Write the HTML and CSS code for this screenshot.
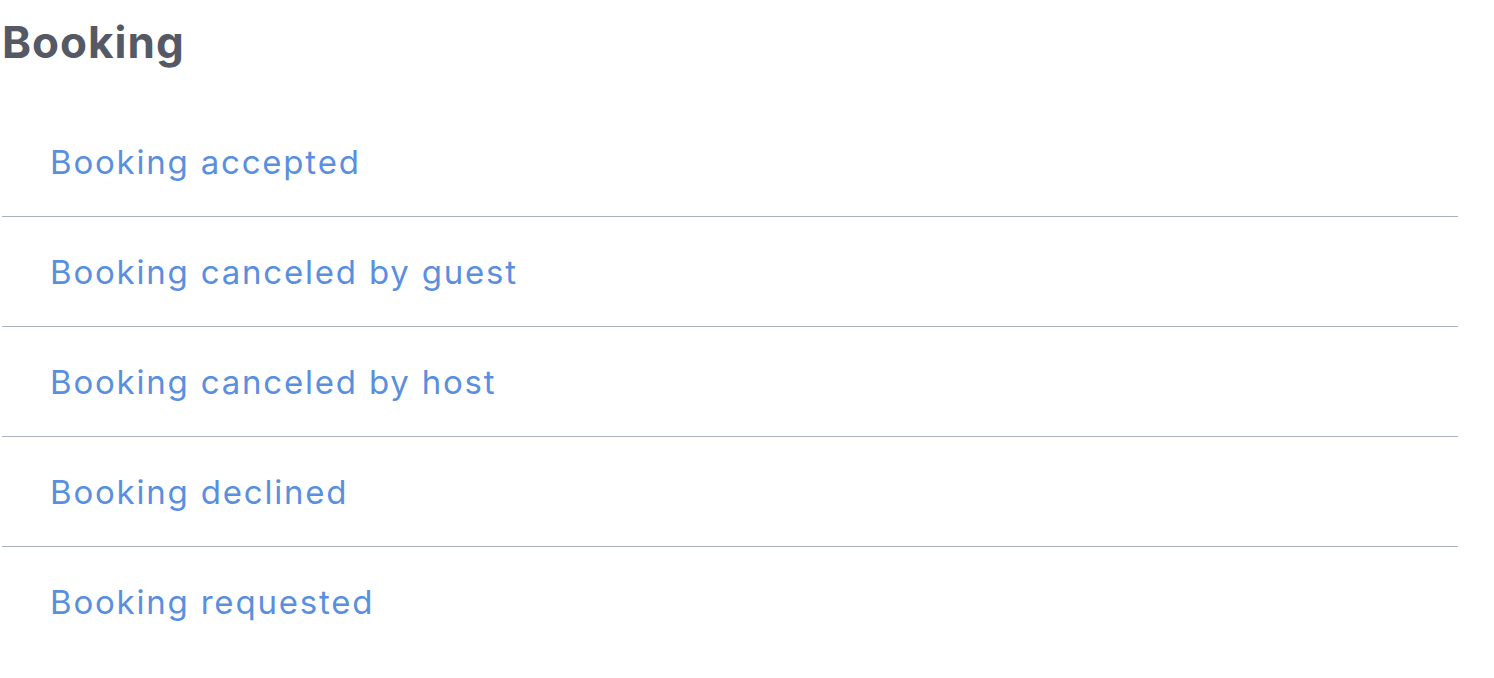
FILE: index.html
```html
<!DOCTYPE html>
<html>
<head>
<meta charset="utf-8">
<link rel="stylesheet" href="styles.css">
</head>
<body>
<div class="page">
  <h1 class="title">Booking</h1>
  <ul class="list">
    <li class="item"><a class="link" href="#">Booking accepted</a></li>
    <li class="item"><a class="link" href="#">Booking canceled by guest</a></li>
    <li class="item"><a class="link" href="#">Booking canceled by host</a></li>
    <li class="item"><a class="link" href="#">Booking declined</a></li>
    <li class="item"><a class="link" href="#">Booking requested</a></li>
  </ul>
</div>
</body>
</html>
```
FILE: styles.css
```css
html, body {
  margin: 0;
  padding: 0;
  background: #ffffff;
}
.page {
  width: 1456px;
  padding-left: 2px;
  font-family: Inter, "Noto Sans", sans-serif;
}
.title {
  margin: 0;
  padding-top: 14px;
  padding-left: 0;
  font-size: 44px;
  line-height: 56px;
  font-weight: 700;
  color: #555966;
  letter-spacing: 1px;
}
.list {
  list-style: none;
  margin: 37px 0 0 0;
  padding: 0;
}
.item {
  height: 109px;
  display: flex;
  align-items: center;
  padding-left: 48px;
  border-bottom: 1px solid #a8b3be;
}
.item:last-child {
  border-bottom: none;
}
.link {
  font-size: 33px;
  color: #5a8fdf;
  text-decoration: none;
  letter-spacing: 1.8px;
}
```
